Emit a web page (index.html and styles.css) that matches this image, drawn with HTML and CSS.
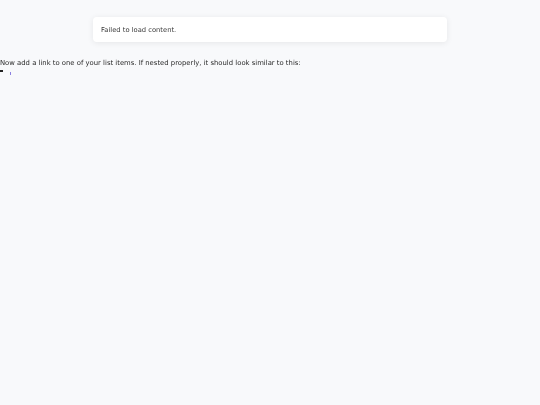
FILE: index.html
```html
<!DOCTYPE html>
<html>
<head>
<meta charset="utf-8">
<link rel="stylesheet" href="styles.css">
</head>
<body>
<main class="page">
<div class="notice">Failed to load content.</div>
<p class="intro">Now add a link to one of your list items. If nested properly, it should look similar to this:</p>
<ul class="list">
<li class="item"><a class="link" href="#" aria-label="link"></a></li>
</ul>
</main>
</body>
</html>
```
FILE: styles.css
```css
html, body {
  margin: 0;
  padding: 0;
  background: #f8f9fb;
}
.page {
  font-family: "DejaVu Sans", sans-serif;
  font-size: 6.75px;
  color: #2a2a2a;
  min-height: 405px;
  will-change: transform;
  overflow: hidden;
}
.notice {
  width: 354px;
  box-sizing: border-box;
  margin: 17px auto 0;
  padding: 9px 8px 7px;
  height: 25px;
  line-height: 9px;
  background: #fff;
  border-radius: 4px;
  box-shadow: 0 1px 6px rgba(0,0,0,0.08);
  color: #3a3a3a;
}
.intro {
  margin: 17px 0 0;
  line-height: 9px;
  font-size: 6.85px;
}
.list {
  margin: 0;
  padding: 0;
  list-style: none;
  line-height: 9px;
  height: 9px;
}
.item {
  display: flex;
  align-items: flex-start;
  padding-top: 1px;
}
.item::before {
  content: "";
  width: 3px;
  height: 2px;
  background: #222;
  margin-top: 1px;
}
.link {
  display: block;
  width: 1px;
  height: 3px;
  margin: 3px 0 0 7px;
  background: #8c80e0;
}
```
